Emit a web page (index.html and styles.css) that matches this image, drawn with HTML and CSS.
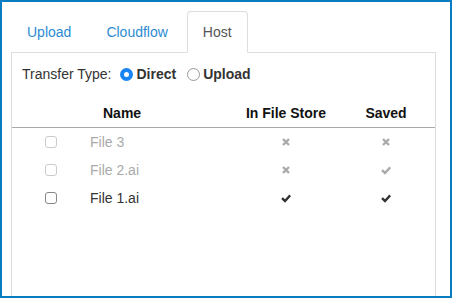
FILE: index.html
```html
<!DOCTYPE html>
<html lang="en">
<head>
    <meta charset="UTF-8">
    <title>Transfer</title>
    <link rel="stylesheet" href="styles.css">
</head>
<body>
    <div class="frame">
        <ul class="tabs">
            <li class="tab"><a href="#">Upload</a></li>
            <li class="tab"><a href="#">Cloudflow</a></li>
            <li class="tab active"><a href="#">Host</a></li>
        </ul>

        <div class="panel">
            <div class="transfer">
                <span class="transfer-label">Transfer Type:</span>
                <label class="option"><span class="radio checked"></span>Direct</label>
                <label class="option"><span class="radio"></span>Upload</label>
            </div>

            <div class="files">
                <div class="row head">
                    <div></div>
                    <div class="name">Name</div>
                    <div class="mid">In File Store</div>
                    <div class="mid">Saved</div>
                </div>

                <div class="row disabled">
                    <div class="mid"><span class="box"></span></div>
                    <div class="name">File 3</div>
                    <div class="mid">
                        <svg class="icon" viewBox="0 0 10 10"><path d="M2 2 L8 8 M8 2 L2 8"/></svg>
                    </div>
                    <div class="mid">
                        <svg class="icon" viewBox="0 0 10 10"><path d="M2 2 L8 8 M8 2 L2 8"/></svg>
                    </div>
                </div>

                <div class="row disabled">
                    <div class="mid"><span class="box"></span></div>
                    <div class="name">File 2.ai</div>
                    <div class="mid">
                        <svg class="icon" viewBox="0 0 10 10"><path d="M2 2 L8 8 M8 2 L2 8"/></svg>
                    </div>
                    <div class="mid">
                        <svg class="icon" viewBox="0 0 10 10"><path d="M1 5.2 L4 8 L9.2 2.4"/></svg>
                    </div>
                </div>

                <div class="row">
                    <div class="mid"><span class="box"></span></div>
                    <div class="name">File 1.ai</div>
                    <div class="mid">
                        <svg class="icon" viewBox="0 0 10 10"><path d="M1 5.2 L4 8 L9.2 2.4"/></svg>
                    </div>
                    <div class="mid">
                        <svg class="icon" viewBox="0 0 10 10"><path d="M1 5.2 L4 8 L9.2 2.4"/></svg>
                    </div>
                </div>
            </div>
        </div>
    </div>
</body>
</html>
```

FILE: styles.css
```css
body {
    margin: 0;
    font-family: "Liberation Sans", Arial, sans-serif;
    font-size: 14px;
    line-height: 20px;
    color: #333;
    background: #fff;
}

.frame {
    box-sizing: border-box;
    height: 298px;
    border: 2px solid #0a7dc0;
    padding: 9px 14px 0 9px;
    overflow: hidden;
    display: flex;
    flex-direction: column;
}

.tabs {
    list-style: none;
    margin: 0;
    padding: 0;
    display: flex;
    position: relative;
    z-index: 1;
}

.tab {
    margin-right: 3px;
    margin-bottom: -1px;
}

.tab a {
    display: block;
    padding: 10px 15px;
    border: 1px solid transparent;
    border-radius: 4px 4px 0 0;
    color: #2d8bd3;
    text-decoration: none;
}

.tab.active a {
    color: #555;
    background: #fff;
    border-color: #ddd #ddd transparent;
}

.panel {
    flex: 1;
    border: 1px solid #ddd;
    border-bottom: none;
    padding-top: 11px;
}

.transfer {
    display: flex;
    align-items: center;
    padding-left: 10px;
}

.transfer-label {
    margin-right: 9px;
}

.option {
    display: flex;
    align-items: center;
    font-weight: bold;
    color: #333;
    margin-right: 11px;
}

.radio {
    box-sizing: border-box;
    width: 13px;
    height: 13px;
    border-radius: 50%;
    border: 1px solid #999;
    margin-right: 3px;
    background: #fff;
}

.radio.checked {
    border: 4.5px solid #1a84f2;
    background: #fff;
}

.files {
    margin-top: 15px;
}

.row {
    display: grid;
    grid-template-columns: 78px 1fr 102px 98px;
    align-items: center;
    height: 28px;
}

.row.head {
    font-weight: bold;
    color: #111;
    border-bottom: 1px solid #aaa;
}

.row.head .name {
    padding-left: 13px;
}

.name {
    text-align: left;
}

.mid {
    display: flex;
    justify-content: center;
    align-items: center;
}

.box {
    box-sizing: border-box;
    width: 12px;
    height: 12px;
    border: 1px solid #888;
    border-radius: 3px;
    background: #fff;
}

.icon {
    width: 10px;
    height: 10px;
    fill: none;
    stroke: #333;
    stroke-width: 2.4;
}

.disabled {
    color: #aaa;
}

.disabled .box {
    border-color: #ccc;
}

.disabled .icon {
    stroke: #aaa;
}
```
